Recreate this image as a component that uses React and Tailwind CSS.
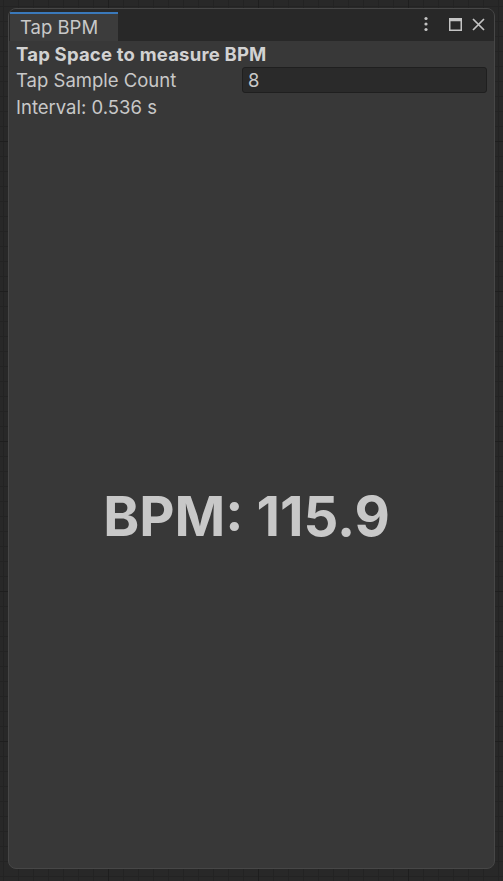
const gridBg =
  'bg-[#282828] bg-[linear-gradient(to_right,#1e1e1e_1px,transparent_1px),linear-gradient(to_bottom,#1e1e1e_1px,transparent_1px),linear-gradient(to_right,#232323_1px,transparent_1px),linear-gradient(to_bottom,#232323_1px,transparent_1px)] bg-[size:150px_150px,150px_150px,15px_15px,15px_15px] bg-[position:108px_0,0_141px,3px_0,0_6px]';

const KebabIcon = () => (
  <svg width="6" height="16" viewBox="0 0 6 16" fill="#c4c4c4">
    <circle cx="3" cy="2.5" r="1.6" />
    <circle cx="3" cy="8" r="1.6" />
    <circle cx="3" cy="13.5" r="1.6" />
  </svg>
);

const MaximizeIcon = () => (
  <svg width="13" height="13" viewBox="0 0 13 13" fill="none">
    <rect x="0.75" y="0.75" width="11.5" height="11.5" stroke="#c4c4c4" strokeWidth="1.5" />
    <rect x="0.75" y="0.75" width="11.5" height="2.5" fill="#c4c4c4" />
  </svg>
);

const CloseIcon = () => (
  <svg width="13" height="13" viewBox="0 0 13 13" fill="none">
    <path d="M1 1 L12 12 M12 1 L1 12" stroke="#c4c4c4" strokeWidth="1.7" />
  </svg>
);

export default function App() {
  return (
    <div className={`min-h-screen w-full p-2 ${gridBg} font-['Inter','Noto_Sans',sans-serif]`}>
      <div className="flex h-[861px] flex-col overflow-hidden rounded-lg border border-[#474747] bg-[#383838]">
        {/* Tab strip */}
        <div className="flex h-8 items-end justify-between bg-[#282828] pl-[1px]">
          <div className="flex h-[29px] w-[108px] flex-col bg-[#3c3c3c]">
            <div className="h-[2px] bg-[#3a79bb]" />
            <span className="pl-[10px] pt-[3px] text-[18.5px] leading-5 text-[#c8c8c8]">Tap BPM</span>
          </div>
          <div className="flex h-full items-center pr-[9px] pb-[2px]">
            <KebabIcon />
            <span className="ml-[20px]">
              <MaximizeIcon />
            </span>
            <span className="ml-[10px]">
              <CloseIcon />
            </span>
          </div>
        </div>

        {/* Body */}
        <div className="flex flex-1 flex-col px-[7px] pt-[2px] text-[18.5px] text-[#c8c8c8]">
          <div className="h-[22px] font-bold leading-[22px] tracking-[0.2px] text-[#d2d2d2]">Tap Space to measure BPM</div>
          <div className="mt-[2px] flex h-[26px] items-center">
            <span className="w-[226px] shrink-0 leading-5">Tap Sample Count</span>
            <div className="flex h-[26px] flex-1 items-center rounded-[3px] border border-[#1f1f1f] bg-[#2a2a2a] pl-[5px] leading-5">
              8
            </div>
          </div>
          <div className="mt-[3px] h-[22px] leading-[22px]">Interval: 0.536 s</div>

          <div className="flex flex-1 items-center justify-center pt-[46px] pr-[10px]">
            <span className="text-[54.5px] font-bold leading-none text-[#c8c8c8]">BPM: 115.9</span>
          </div>
        </div>
      </div>
    </div>
  );
}
